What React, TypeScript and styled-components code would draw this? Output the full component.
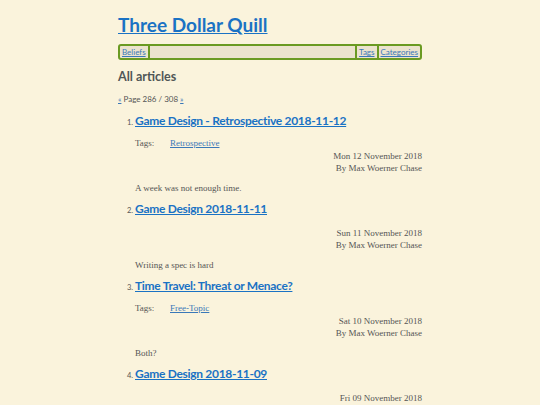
import React from 'react'
import styled, { createGlobalStyle } from 'styled-components'

const GlobalStyle = createGlobalStyle`
  html, body {
    margin: 0;
    padding: 0;
    background: #faf3dc;
  }
  body {
    font-family: "Liberation Serif", serif;
    color: #555;
  }
`;

type Article = {
  title: string
  tags?: string[]
  date: string
  author: string
  summary: string
}

const articles: Article[] = [
  { title: 'Game Design - Retrospective 2018-11-12', tags: ['Retrospective'], date: 'Mon 12 November 2018', author: 'Max Woerner Chase', summary: 'A week was not enough time.' },
  { title: 'Game Design 2018-11-11', date: 'Sun 11 November 2018', author: 'Max Woerner Chase', summary: 'Writing a spec is hard' },
  { title: 'Time Travel: Threat or Menace?', tags: ['Free-Topic'], date: 'Sat 10 November 2018', author: 'Max Woerner Chase', summary: 'Both?' },
  { title: 'Game Design 2018-11-09', date: 'Fri 09 November 2018', author: 'Max Woerner Chase', summary: '' },
]

export default function App() {
  return (
    <>
      <GlobalStyle />
      <Page>
        <SiteTitle href="#">Three Dollar Quill</SiteTitle>
        <NavBar>
          <NavCell><NavLink href="#">Beliefs</NavLink></NavCell>
          <NavFiller />
          <NavCell><NavLink href="#">Tags</NavLink></NavCell>
          <NavCell $last><NavLink href="#">Categories</NavLink></NavCell>
        </NavBar>
        <Heading>All articles</Heading>
        <Pager>
          <PagerLink href="#">«</PagerLink> Page 286 / 308 <PagerLink href="#">»</PagerLink>
        </Pager>
        <ArticleList>
          {articles.map((a) => (
            <Item key={a.title}>
              <ItemTitle href="#">{a.title}</ItemTitle>
              {a.tags && (
                <TagRow>
                  <TagLabel>Tags:</TagLabel>
                  {a.tags.map((t) => <TagLink key={t} href="#">{t}</TagLink>)}
                </TagRow>
              )}
              <Meta $spaced={!a.tags}>
                <div>{a.date}</div>
                <div>By {a.author}</div>
              </Meta>
              {a.summary && <Summary>{a.summary}</Summary>}
            </Item>
          ))}
        </ArticleList>
      </Page>
    </>
  )
}

const Page = styled.div`
  width: 304px;
  margin: 0 auto;
  padding-top: 12px;
`;

const SiteTitle = styled.a`
  display: block;
  font-family: Lato, sans-serif;
  font-weight: 700;
  font-size: 19px;
  line-height: 26px;
  color: #1a72c4;
  text-decoration: underline;
`;

const NavBar = styled.nav`
  display: flex;
  align-items: stretch;
  margin-top: 6px;
  height: 12px;
  border: 2px solid #6a9a22;
  border-radius: 3px;
  background: #ebe3cd;
  font-family: Lato, sans-serif;
  font-size: 8px;
  line-height: 12px;
`;

const NavCell = styled.div<{ $last?: boolean }>`
  padding: 0 2px;
  border-right: ${(p) => (p.$last ? 'none' : '2px solid #6a9a22')};
`;

const NavFiller = styled.div`
  flex: 1;
  border-right: 2px solid #6a9a22;
`;

const NavLink = styled.a`
  color: #3a78b8;
  text-decoration: underline;
`;

const Heading = styled.h2`
  margin: 9px 0 0;
  font-family: Lato, sans-serif;
  font-weight: 700;
  font-size: 12.5px;
  line-height: 16px;
  color: #505656;
`;

const Pager = styled.p`
  margin: 9px 0 0;
  font-family: Lato, sans-serif;
  font-size: 8px;
  line-height: 10px;
  color: #555;
`;

const PagerLink = styled.a`
  color: #3a78b8;
  text-decoration: underline;
`;

const ArticleList = styled.ol`
  margin: 8px 0 0;
  padding-left: 17px;
  font-family: Lato, sans-serif;
  font-size: 7.5px;
  color: #555;
`;

const Item = styled.li`
  padding-bottom: 6px;
`;

const ItemTitle = styled.a`
  font-family: Lato, sans-serif;
  font-weight: 700;
  font-size: 12px;
  line-height: 18px;
  letter-spacing: -0.3px;
  color: #1a72c4;
  text-decoration: underline;
`;

const TagRow = styled.div`
  display: flex;
  margin-top: 7px;
  font-family: "Liberation Serif", serif;
  font-size: 9px;
  line-height: 12px;
`;

const TagLabel = styled.span`
  width: 35px;
`;

const TagLink = styled.a`
  color: #3a78b8;
  text-decoration: underline;
`;

const Meta = styled.div<{ $spaced: boolean }>`
  margin-top: ${(p) => (p.$spaced ? '9px' : '1px')};
  text-align: right;
  font-family: "Liberation Serif", serif;
  font-size: 9px;
  line-height: 12px;
`;

const Summary = styled.p`
  margin: 8px 0 0;
  font-family: "Liberation Serif", serif;
  font-size: 9px;
  line-height: 12px;
`;
